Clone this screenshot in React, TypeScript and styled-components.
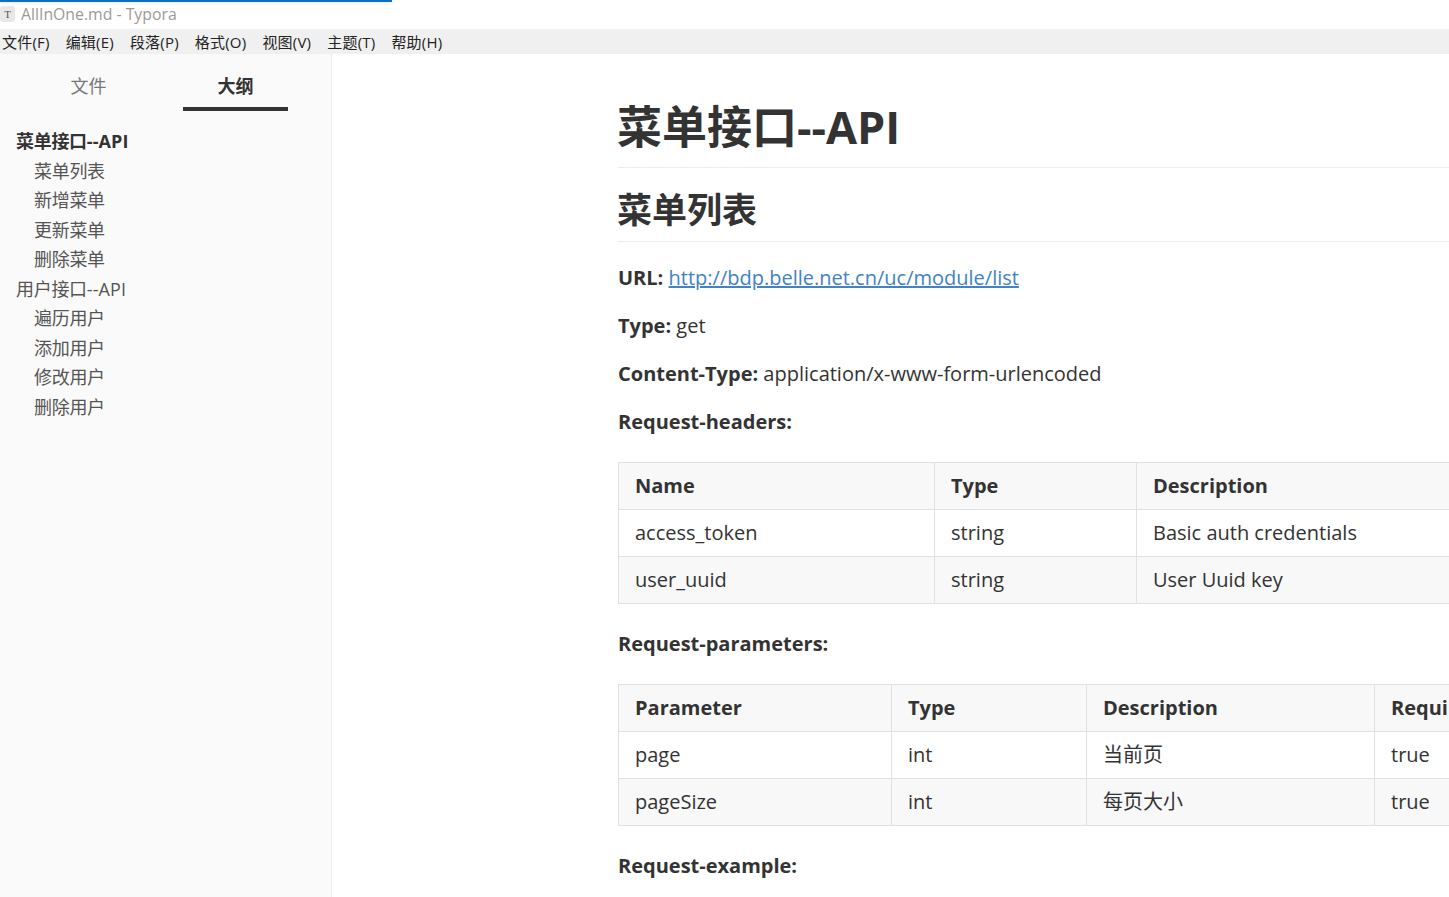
import React from "react";
import styled, { createGlobalStyle } from "styled-components";

const Global = createGlobalStyle`
  html, body { margin: 0; padding: 0; height: 100%; overflow: hidden; background: #fff; }
  #root { height: 100%; }
`;
const FONT = `"Open Sans", "Noto Sans CJK SC", sans-serif`;
const Win = styled.div`
  width: 1449px; height: 897px; display: flex; flex-direction: column; position: relative; overflow: hidden;
  font-family: ${FONT}; color: #333;
`;
const Progress = styled.div`position: absolute; left: 0; top: 0; width: 392px; height: 2px; background: #0a70c8; box-shadow: 0 1px 3px rgba(0,0,0,.12);`;
const TitleBar = styled.div`
  height: 29px; flex: none; display: flex; align-items: center; gap: 6px; padding: 0 0 2px 0; font-size: 15.8px; color: #9a9a9a; box-sizing: border-box;
`;
const AppIcon = styled.div`
  width: 15px; height: 16px; border-radius: 3px; background: #e8e8e8; color: #555; font: 11px "Liberation Serif", serif; display: flex; align-items: center; justify-content: center; box-sizing: border-box;
`;
const MenuBar = styled.div`
  height: 25px; flex: none; background: #f0f0f0; display: flex; align-items: center; gap: 16px; padding-left: 2px;
  font-size: 15px; color: #222; letter-spacing: 0.21px;
`;
const Body = styled.div`flex: 1; display: flex; min-height: 0;`;
const Side = styled.div`
  width: 331px; flex: none; background: #fafafa; border-right: 1px solid #eee;
`;
const Tabs = styled.div`display: flex; padding-top: 17px; height: 57px; box-sizing: border-box;`;
const Tab = styled.div<{ $active?: boolean; $w: number; $ml: number }>`
  width: ${p => p.$w}px; margin-left: ${p => p.$ml}px; height: 40px; text-align: center; font-size: 18px; line-height: 30px; box-sizing: border-box;
  font-weight: ${p => (p.$active ? 700 : 400)};
  color: ${p => (p.$active ? "#333" : "#777")};
  border-bottom: ${p => (p.$active ? "4px solid #333" : "none")};
`;
const Outline = styled.div`padding-top: 16px;`;
const OutlineItem = styled.div<{ $level: number; $bold?: boolean }>`
  height: 29.5px; line-height: 29.5px; font-size: 18px; letter-spacing: -0.3px;
  padding-left: ${p => (p.$level === 2 ? 34 : 16)}px;
  font-weight: ${p => (p.$bold ? 700 : 400)};
  color: ${p => (p.$bold ? "#333" : "#555")};
`;
const Latin = styled.span`letter-spacing: 0.1px;`;
const Main = styled.div`flex: 1; padding-left: 286px; min-width: 0; overflow: hidden;`;
const H1 = styled.h1`
  margin: 0; padding-top: 39px; height: 114px; box-sizing: border-box; font-size: 45px; line-height: 67px; font-weight: 700; color: #333; border-bottom: 1px solid #eee; white-space: nowrap;
  text-indent: -1px;
`;
const H2 = styled.h2`
  margin: 0 0 22px; height: 74px; box-sizing: border-box; font-size: 35px; line-height: 84px; font-weight: 700; color: #333; border-bottom: 1px solid #eee;
  text-indent: -1px;
`;
const Para = styled.p<{ $tight?: boolean }>`
  margin: 0; height: ${p => (p.$tight ? 28 : 48)}px; font-size: 20px; line-height: 28px; color: #333; white-space: nowrap;
`;
const Strong = styled.strong`font-weight: 700;`;
const Link = styled.a`color: #4183c4; text-decoration: underline;`;
const Table = styled.div<{ $cols: string }>`
  display: grid; grid-template-columns: ${p => p.$cols}; width: 900px; margin: 26px 0 26px; border-top: 1px solid #dfe2e5; border-left: 1px solid #dfe2e5; font-size: 20px; white-space: nowrap;
`;
const Cell = styled.div<{ $head?: boolean; $shade?: boolean }>`
  height: 47px; box-sizing: border-box; padding: 0 16px; line-height: 46px; border-right: 1px solid #dfe2e5; border-bottom: 1px solid #dfe2e5; overflow: hidden;
  font-weight: ${p => (p.$head ? 700 : 400)};
  background: ${p => (p.$shade ? "#f8f8f8" : "#fff")};
`;
const renderTable = (cols: string, rows: string[][]) => (
  <Table $cols={cols}>
    {rows.map((r, i) => r.map((c, j) => <Cell key={i + "-" + j} $head={i === 0} $shade={i !== 1}>{c}</Cell>))}
  </Table>
);
const menus = ["文件(F)", "编辑(E)", "段落(P)", "格式(O)", "视图(V)", "主题(T)", "帮助(H)"];
const outline: [string, number, string?, boolean?][] = [
  ["菜单接口", 1, "--API", true], ["菜单列表", 2], ["新增菜单", 2], ["更新菜单", 2], ["删除菜单", 2],
  ["用户接口", 1, "--API"], ["遍历用户", 2], ["添加用户", 2], ["修改用户", 2], ["删除用户", 2],
];
export default function App() {
  return (
    <Win>
      <Global />
      <Progress />
      <TitleBar><AppIcon>T</AppIcon>AllInOne.md - Typora</TitleBar>
      <MenuBar>{menus.map(m => <span key={m}>{m}</span>)}</MenuBar>
      <Body>
        <Side>
          <Tabs>
            <Tab $w={105} $ml={36}>文件</Tab>
            <Tab $w={105} $ml={42} $active>大纲</Tab>
          </Tabs>
          <Outline>
            {outline.map(([t, l, lat, b]) => (
              <OutlineItem key={t} $level={l} $bold={b}>{t}{lat && <Latin>{lat}</Latin>}</OutlineItem>
            ))}
          </Outline>
        </Side>
        <Main>
          <H1>菜单接口--API</H1>
          <H2>菜单列表</H2>
          <Para><Strong>URL:</Strong> <Link>http://bdp.belle.net.cn/uc/module/list</Link></Para>
          <Para><Strong>Type:</Strong> get</Para>
          <Para><Strong>Content-Type:</Strong> application/x-www-form-urlencoded</Para>
          <Para $tight><Strong>Request-headers:</Strong></Para>
          {renderTable("316px 202px 1fr", [["Name", "Type", "Description"], ["access_token", "string", "Basic auth credentials"], ["user_uuid", "string", "User Uuid key"]])}
          <Para $tight><Strong>Request-parameters:</Strong></Para>
          {renderTable("273px 195px 288px 1fr", [["Parameter", "Type", "Description", "Required"], ["page", "int", "当前页", "true"], ["pageSize", "int", "每页大小", "true"]])}
          <Para><Strong>Request-example:</Strong></Para>
        </Main>
      </Body>
    </Win>
  );
}
